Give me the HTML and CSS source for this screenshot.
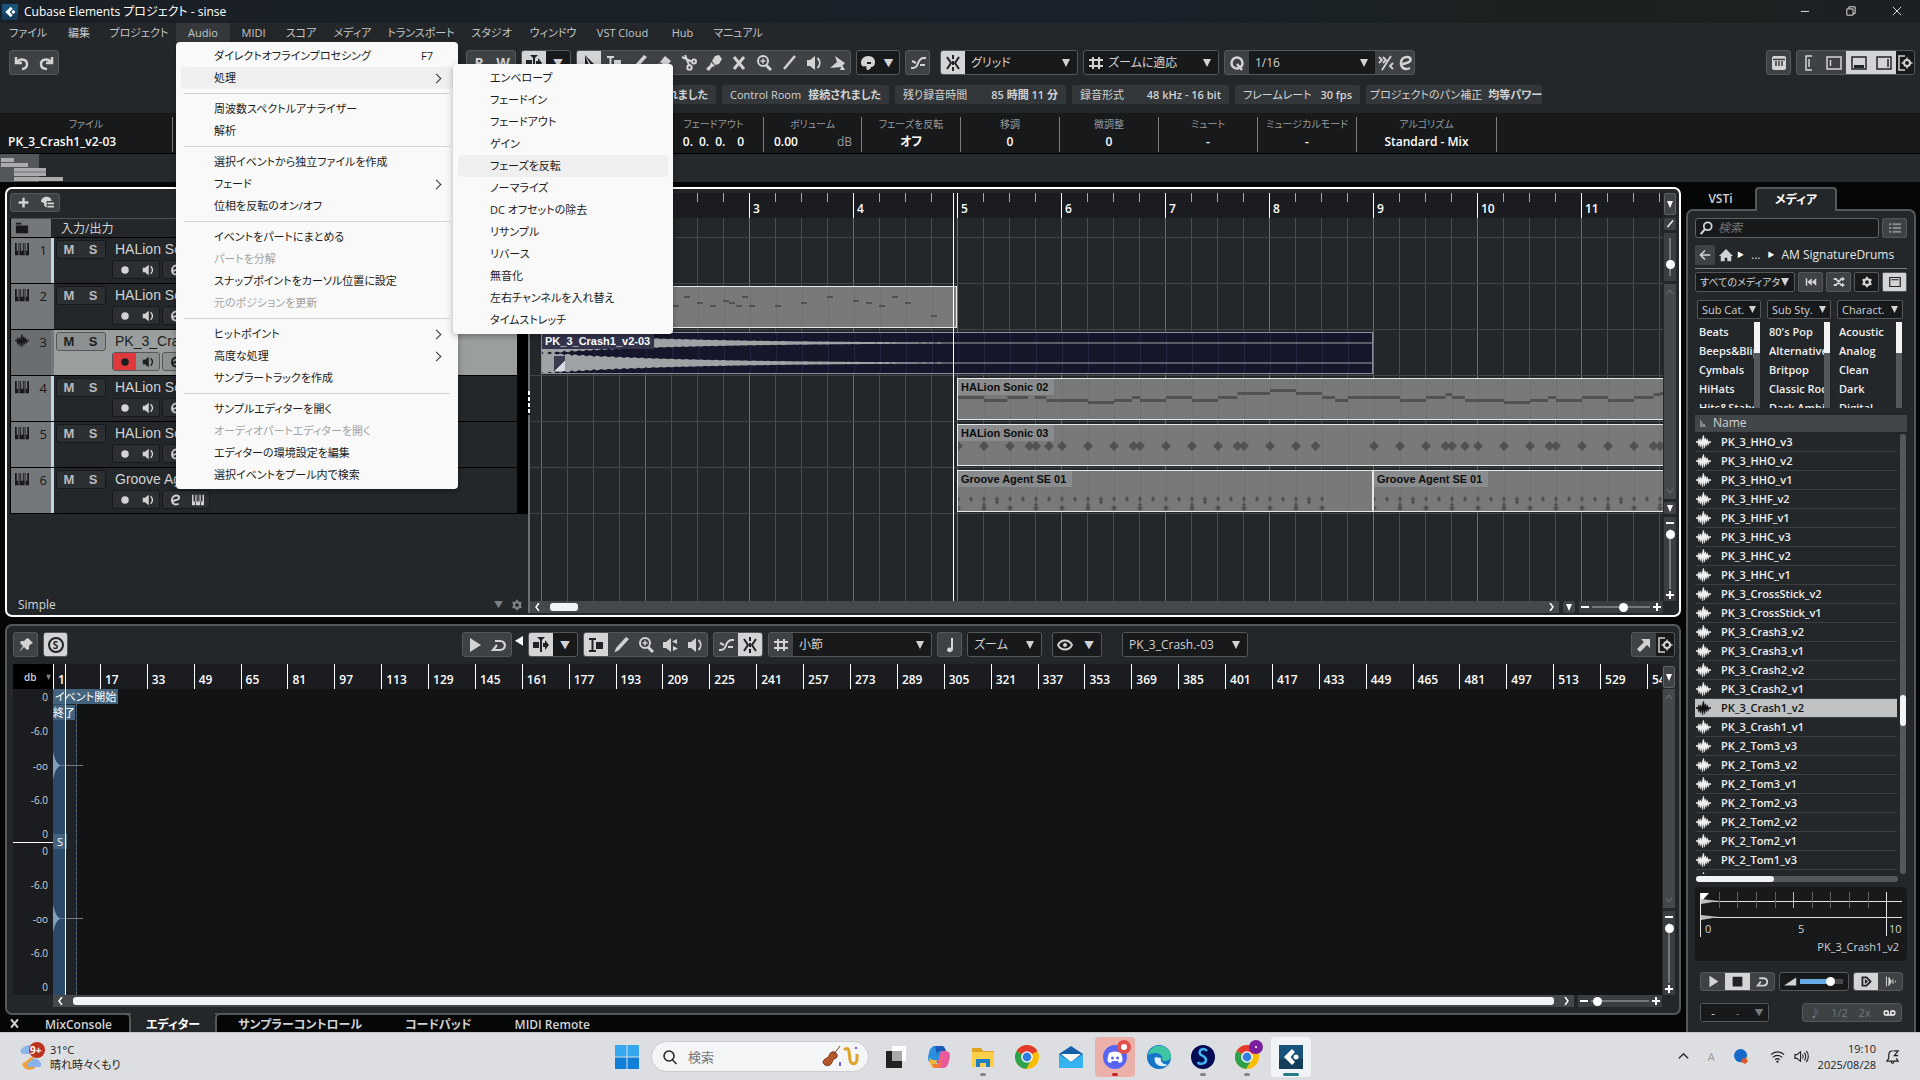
FILE: index.html
```html
<!DOCTYPE html>
<html lang="ja">
<head>
    <meta charset="UTF-8">
    <meta name="viewport" content="width=device-width, initial-scale=1.0">
    <title>Cubase Elements プロジェクト - sinse</title>
    <link rel="stylesheet" href="styles.css">
</head>
<body>
<svg class="sprite" aria-hidden="true">
    <symbol id="undo" viewBox="0 0 16 16"><path d="M2 2v6h6M3 7.500C6 3 13 4 13 9c0 3-2 5-5 5" fill="none" stroke="currentColor" stroke-width="2.500"/></symbol>
    <symbol id="redo" viewBox="0 0 16 16"><path d="M14 2v6H8M13 7.500C10 3 3 4 3 9c0 3 2 5 6 5" fill="none" stroke="currentColor" stroke-width="2.500"/></symbol>
    <symbol id="autoscroll" viewBox="0 0 16 16"><path d="M7 1h2v14H7zM0 5h6v6H0zM10 6h2V3l4 5-4 5v-3h-2zM4 0h8L8 4z" fill="currentColor"/></symbol>
    <symbol id="arrow" viewBox="0 0 16 16"><path d="M4 0v14l3.500-3 4 1.500z M4 0l9 9-5 1z" fill="currentColor"/></symbol>
    <symbol id="range" viewBox="0 0 16 16"><path d="M1 1h7v2H5.500v10H8v2H1v-2h2.500V3H1z" fill="currentColor"/><path d="M8 5h7v7H8z" fill="currentColor"/></symbol>
    <symbol id="pencil" viewBox="0 0 16 16"><path d="M13 0l3 2L6 13l-4.500 2.500L3 11z" fill="currentColor"/></symbol>
    <symbol id="eraser" viewBox="0 0 16 16"><path d="M9 1l6 5-5 6-6-5zM3 8l6 5-2 2H4l-3-3z" fill="currentColor"/></symbol>
    <symbol id="scissors" viewBox="0 0 16 16"><g fill="none" stroke="currentColor" stroke-width="2"><path d="M1 2l9.500 4.500M4 0l4 10"/><circle cx="13" cy="6.500" r="2"/><circle cx="8.500" cy="12.500" r="2.200"/></g></symbol>
    <symbol id="glue" viewBox="0 0 16 16"><path d="M9 1l4-1 3 4-3 5-4 1-3-4zM5 7l4 4-3 1-3 4-3-2 4-4z" fill="currentColor"/></symbol>
    <symbol id="cross" viewBox="0 0 16 16"><path d="M3 2l10 12M13 2L3 14" stroke="currentColor" stroke-width="3"/></symbol>
    <symbol id="zoom" viewBox="0 0 16 16"><circle cx="7" cy="6" r="5" fill="none" stroke="currentColor" stroke-width="2"/><path d="M10 10l5 5" stroke="currentColor" stroke-width="3"/><path d="M4.500 6h5M7 3.500v5" stroke="currentColor" stroke-width="1.500"/></symbol>
    <symbol id="line" viewBox="0 0 16 16"><path d="M14 1L3 14" stroke="currentColor" stroke-width="2.500"/></symbol>
    <symbol id="speaker" viewBox="0 0 16 16"><path d="M1 5h3l5-4v14l-5-4H1z" fill="currentColor"/><path d="M11.500 3c3 3 3 7 0 10" fill="none" stroke="currentColor" stroke-width="1.800"/></symbol>
    <symbol id="scrub" viewBox="0 0 16 16"><path d="M0 5h3l5-4v14l-5-4H0zM14 2v5L9 4.500zM10 9l5 2.500-5 2.500z" fill="currentColor"/></symbol>
    <symbol id="fill" viewBox="0 0 16 16"><path d="M5 1l10 7-4 4-11 1 7-6z" fill="currentColor"/><path d="M12 10l3 5h-5z" fill="currentColor"/></symbol>
    <symbol id="palette" viewBox="0 0 16 16"><path d="M8 1c5 0 7 3 7 6 0 4-2 5-4 5 0 2-2 3-4 3-1-1 0-3-1-4-3 1-5 0-5-3 0-4 3-7 7-7z" fill="currentColor"/><path d="M7 7h4v2H7z" fill="#17191b"/></symbol>
    <symbol id="crossfade" viewBox="0 0 16 16"><path d="M1 13h2c7 0 3-10 11-10h2M2 6l4 2M10 10h5" fill="none" stroke="currentColor" stroke-width="2"/></symbol>
    <symbol id="snap" viewBox="0 0 16 16"><path d="M8 0v4M8 6v4M8 12v4M2 2l4 6-4 6M14 2l-4 6 4 6" fill="none" stroke="currentColor" stroke-width="2"/></symbol>
    <symbol id="hash" viewBox="0 0 16 16"><path d="M5 2v12M11 2v12M1 5h14M1 11h14" stroke="currentColor" stroke-width="2"/></symbol>
    <symbol id="quant" viewBox="0 0 16 16"><circle cx="8" cy="8" r="5.500" fill="none" stroke="currentColor" stroke-width="2.500"/><path d="M8 9l5 6" stroke="currentColor" stroke-width="2.500"/></symbol>
    <symbol id="iq" viewBox="0 0 16 16"><path d="M1 2l3 3-3 3M5 2l3 3-3 3M13 1L4 15M15 8l-3 3 3 3" fill="none" stroke="currentColor" stroke-width="1.800"/></symbol>
    <symbol id="edit" viewBox="0 0 16 16"><path d="M13 13c-4 2-9 1-9-5 0-4 3-6 6-6 4 0 5 4 1 5.500L3 10" fill="none" stroke="currentColor" stroke-width="2.500"/></symbol>
    <symbol id="keyboard" viewBox="0 0 16 16"><rect x="1" y="1" width="14" height="14" rx="2" fill="currentColor"/><path d="M2 4.500h12M5 6v5M8 6v5M11 6v5" stroke="#3b3e41" stroke-width="1.500"/></symbol>
    <symbol id="zone-l" viewBox="0 0 16 16"><path d="M11 1H5v14h6M8 4v8" fill="none" stroke="currentColor" stroke-width="1.500"/></symbol>
    <symbol id="zone-left" viewBox="0 0 16 16"><path d="M1 2h14v12H1zM4.500 5v6" fill="none" stroke="currentColor" stroke-width="1.500"/></symbol>
    <symbol id="zone-low" viewBox="0 0 16 16"><path d="M1 2h14v12H1z" fill="none" stroke="currentColor" stroke-width="1.500"/><path d="M3 10h10v3H3z" fill="currentColor"/></symbol>
    <symbol id="zone-right" viewBox="0 0 16 16"><path d="M1 2h14v12H1zM12 4v8" fill="none" stroke="currentColor" stroke-width="1.500"/></symbol>
    <symbol id="setup" viewBox="0 0 16 16"><path d="M8 1H2v14h6" fill="none" stroke="currentColor" stroke-width="1.500"/><circle cx="10" cy="8" r="3" fill="none" stroke="currentColor" stroke-width="2"/><path d="M10 2.500v3M10 10.500v3M4.500 8h3M12.500 8h3" stroke="currentColor" stroke-width="1.500"/></symbol>
    <symbol id="gear" viewBox="0 0 16 16"><circle cx="8" cy="8" r="4" fill="none" stroke="currentColor" stroke-width="3"/><path d="M8 1v3M8 12v3M2 4.500l2.500 1.500M11.500 10l2.500 1.500M2 11.500L4.500 10M11.500 6L14 4.500" stroke="currentColor" stroke-width="2.500"/></symbol>
    <symbol id="plus" viewBox="0 0 16 16"><path d="M8 2v12M2 8h12" stroke="currentColor" stroke-width="3"/></symbol>
    <symbol id="preset" viewBox="0 0 16 16"><path d="M0 7c0-4 4-6 7-6s6 2 6 5H7v8c-2 0-4-3-3-5zM8 8h8v2H8zM8 12h8v2H8z" fill="currentColor"/></symbol>
    <symbol id="folder" viewBox="0 0 16 16"><path d="M1 2h6v2H1zM1 5h14v9H1z" fill="currentColor"/></symbol>
    <symbol id="keys" viewBox="0 0 16 16"><path d="M0 1h2v9h2v5H0zM4 1h1v9H4zM6 10V1h1v9h2V1h1v9h1v5H5v-5zM11 1h1v9h-1zM14 1h2v14h-4v-5h2z" fill="currentColor"/></symbol>
    <symbol id="wave" viewBox="0 0 16 16"><path d="M0 7h2l1-3 1 3 1-3 1 3 1-4 1-3 1 5 1-2 1 3 1-2 1 3h3v1h-2l-1 3-1-3-1 4-1-3-1 5-1-5-1 6-1-6-1 4-1-4-1 3-1-4H0z" fill="currentColor" stroke="currentColor" stroke-width=".5"/></symbol>
    <symbol id="rec" viewBox="0 0 16 16"><circle cx="8" cy="8" r="5" fill="currentColor"/></symbol>
    <symbol id="play" viewBox="0 0 16 16"><path d="M3 1l11 7-11 7z" fill="currentColor"/></symbol>
    <symbol id="cycle" viewBox="0 0 16 16"><path d="M4 4h5c7 0 6 9 0 9H2l4-5" fill="none" stroke="currentColor" stroke-width="2.200"/></symbol>
    <symbol id="note" viewBox="0 0 16 16"><path d="M9 1h2v11c0 4-6 4-6 1 0-2 2-3 4-2z" fill="currentColor"/></symbol>
    <symbol id="eye" viewBox="0 0 16 16"><path d="M1 8c3-6 11-6 14 0-3 6-11 6-14 0z" fill="none" stroke="currentColor" stroke-width="1.800"/><circle cx="8" cy="8" r="2" fill="currentColor"/></symbol>
    <symbol id="pin" viewBox="0 0 16 16"><path d="M10 1l5 5-2 1-2 2v3l-2 1-3-3-5 5 4-6-3-3 1-2h3l2-2z" fill="currentColor"/></symbol>
    <symbol id="popout" viewBox="0 0 16 16"><path d="M5 2h9v9l-3-3-7 7-3-3 7-7z" fill="currentColor"/></symbol>
    <symbol id="search" viewBox="0 0 16 16"><circle cx="10" cy="6" r="4.500" fill="none" stroke="currentColor" stroke-width="2"/><path d="M7 9l-5 6" stroke="currentColor" stroke-width="2.500"/></symbol>
    <symbol id="list" viewBox="0 0 16 16"><path d="M0 3h3M0 8h3M0 13h3M5 3h11M5 8h11M5 13h11" stroke="currentColor" stroke-width="2.500"/></symbol>
    <symbol id="back" viewBox="0 0 16 16"><path d="M15 8H3M8 2L2 8l6 6" fill="none" stroke="currentColor" stroke-width="2.200"/></symbol>
    <symbol id="home" viewBox="0 0 16 16"><path d="M8 1l8 8h-2v6H9.500v-4h-3v4H2V9H0z" fill="currentColor"/></symbol>
    <symbol id="prev" viewBox="0 0 16 16"><path d="M1 3h2v10H1zM9 3v10L3 8zM15 3v10L9 8z" fill="currentColor"/></symbol>
    <symbol id="shuffle" viewBox="0 0 16 16"><path d="M1 4h3l7 8h2M1 12h3l7-8h2" fill="none" stroke="currentColor" stroke-width="2.500"/><path d="M12 1l4 3-4 3zM12 9l4 3-4 3z" fill="currentColor"/></symbol>
    <symbol id="panel" viewBox="0 0 16 16"><path d="M1 2h14v12H1zM3 5h10" fill="none" stroke="currentColor" stroke-width="1.600"/></symbol>
    <symbol id="stop" viewBox="0 0 16 16"><path d="M2 2h12v12H2z" fill="currentColor"/></symbol>
    <symbol id="ramp" viewBox="0 0 16 16"><path d="M0 13L15 3v10z" fill="currentColor"/></symbol>
    <symbol id="auto" viewBox="0 0 16 16"><path d="M3 3h5l5 5-5 5H3z" fill="none" stroke="currentColor" stroke-width="2.200"/><path d="M6 5l4 3-4 3z" fill="currentColor"/></symbol>
    <symbol id="wait" viewBox="0 0 16 16"><path d="M3 2v12M6 3l3 5-3 5zM11 5v6M14 7v2" fill="currentColor" stroke="currentColor" stroke-width="1.200"/></symbol>
    <symbol id="tape" viewBox="0 0 16 16"><path d="M4 11h8" stroke="currentColor" stroke-width="2"/><circle cx="4" cy="8.500" r="2.500" fill="none" stroke="currentColor" stroke-width="2"/><circle cx="12" cy="8.500" r="2.500" fill="none" stroke="currentColor" stroke-width="2"/></symbol>
    <symbol id="left" viewBox="0 0 8 8"><path d="M5 0L2 4l3 4" fill="none" stroke="currentColor" stroke-width="1.500"/></symbol>
    <symbol id="right" viewBox="0 0 8 8"><path d="M3 0l3 4-3 4" fill="none" stroke="currentColor" stroke-width="1.500"/></symbol>
    <symbol id="up" viewBox="0 0 8 8"><path d="M1 6l3-4 3 4" fill="none" stroke="currentColor"/></symbol>
    <symbol id="down" viewBox="0 0 8 8"><path d="M1 2l3 4 3-4" fill="none" stroke="currentColor"/></symbol>
    <symbol id="drop" viewBox="0 0 8 8"><path d="M1 1h6L4 8z" fill="currentColor"/></symbol>
    <symbol id="minus" viewBox="0 0 8 8"><path d="M0 4h8" stroke="currentColor" stroke-width="2"/></symbol>
    <symbol id="add" viewBox="0 0 8 8"><path d="M0 4h8M4 0v8" stroke="currentColor" stroke-width="2"/></symbol>
    <symbol id="chrome" viewBox="0 0 24 24"><circle cx="12" cy="12" r="12" fill="#fbbc05"/><path d="M12 12L1.600 6A12 12 0 0 1 22.400 6z" fill="#e33b2e"/><path d="M12 12L1.600 6A12 12 0 0 0 11 24l6-10z" fill="#2da14c"/><circle cx="12" cy="12" r="5.800" fill="#fff"/><circle cx="12" cy="12" r="4.400" fill="#2f7de1"/></symbol>
    <symbol id="cubase" viewBox="0 0 24 24"><path d="M0 0h24v24H0z" fill="#17537a"/><path d="M0 14h24v10H0z" fill="#143d5c"/><path d="M13 4l3 3-4.500 5 4.500 5-3 3-8-8z" fill="#fff"/><circle cx="17" cy="12" r="2.500" fill="#fff"/></symbol>
</svg>

<header class="titlebar">
    <svg class="app-icon"><use href="#cubase"/></svg>
    <h1>Cubase Elements プロジェクト - sinse</h1>
    <div class="window-buttons">
        <button aria-label="最小化"><svg viewBox="0 0 12 12"><path d="M1 6.500h10"/></svg></button>
        <button aria-label="元に戻す"><svg viewBox="0 0 12 12"><path d="M1 3.500h7.500V11H1zM3.500 3V1H11v8H9"/></svg></button>
        <button aria-label="閉じる"><svg viewBox="0 0 12 12"><path d="M1 1l10 10M11 1L1 11"/></svg></button>
    </div>
</header>

<nav class="menubar">
    <button>ファイル</button>
    <button>編集</button>
    <button>プロジェクト</button>
    <div class="menu-open">
        <button>Audio</button>
        <div class="menu">
            <button>ダイレクトオフラインプロセシング<kbd>F7</kbd></button>
            <div class="submenu-open">
                <button class="hot sub">処理</button>
                <div class="menu submenu">
                    <button>エンベロープ</button>
                    <button>フェードイン</button>
                    <button>フェードアウト</button>
                    <button>ゲイン</button>
                    <button class="hot">フェーズを反転</button>
                    <button>ノーマライズ</button>
                    <button>DC オフセットの除去</button>
                    <button>リサンプル</button>
                    <button>リバース</button>
                    <button>無音化</button>
                    <button>左右チャンネルを入れ替え</button>
                    <button>タイムストレッチ</button>
                </div>
            </div>
            <hr>
            <button>周波数スペクトルアナライザー</button>
            <button>解析</button>
            <hr>
            <button>選択イベントから独立ファイルを作成</button>
            <button class="sub">フェード</button>
            <button>位相を反転のオン/オフ</button>
            <hr>
            <button>イベントをパートにまとめる</button>
            <button disabled>パートを分解</button>
            <button>スナップポイントをカーソル位置に設定</button>
            <button disabled>元のポジションを更新</button>
            <hr>
            <button class="sub">ヒットポイント</button>
            <button class="sub">高度な処理</button>
            <button>サンプラートラックを作成</button>
            <hr>
            <button>サンプルエディターを開く</button>
            <button disabled>オーディオパートエディターを開く</button>
            <button>エディターの環境設定を編集</button>
            <button>選択イベントをプール内で検索</button>
        </div>
    </div>
    <button>MIDI</button>
    <button>スコア</button>
    <button>メディア</button>
    <button>トランスポート</button>
    <button>スタジオ</button>
    <button>ウィンドウ</button>
    <button>VST Cloud</button>
    <button>Hub</button>
    <button>マニュアル</button>
</nav>

<div class="toolbar main-tools">
    <div class="group">
        <button aria-label="元に戻す"><svg><use href="#undo"/></svg></button>
        <button aria-label="やり直す"><svg><use href="#redo"/></svg></button>
    </div>
    <div class="group states">
        <button>R</button>
        <button>W</button>
    </div>
    <div class="group">
        <button class="on" aria-label="オートスクロール"><svg><use href="#autoscroll"/></svg></button>
        <button class="dark">▼</button>
    </div>
    <div class="group">
        <button class="on" aria-label="選択"><svg><use href="#arrow"/></svg></button>
        <button aria-label="範囲"><svg><use href="#range"/></svg></button>
        <button aria-label="鉛筆"><svg><use href="#pencil"/></svg></button>
        <button aria-label="消しゴム"><svg><use href="#eraser"/></svg></button>
        <button aria-label="はさみ"><svg><use href="#scissors"/></svg></button>
        <button aria-label="のり"><svg><use href="#glue"/></svg></button>
        <button aria-label="ミュート"><svg><use href="#cross"/></svg></button>
        <button aria-label="ズーム"><svg><use href="#zoom"/></svg></button>
        <button aria-label="ライン"><svg><use href="#line"/></svg></button>
        <button aria-label="試聴"><svg><use href="#speaker"/></svg></button>
        <button aria-label="カラー"><svg><use href="#fill"/></svg></button>
    </div>
    <div class="group narrow">
        <button class="dark" aria-label="カラーツール"><svg><use href="#palette"/></svg></button>
        <button class="dark">▼</button>
    </div>
    <div class="group"><button aria-label="クロスフェード"><svg><use href="#crossfade"/></svg></button></div>
    <div class="group snap">
        <button class="on" aria-label="スナップ"><svg><use href="#snap"/></svg></button>
        <select class="w-snap" aria-label="スナップタイプ"><option>グリッド</option></select>
    </div>
    <div class="group dark-group">
        <label for="grid-type"><svg><use href="#hash"/></svg></label>
        <select class="w-grid" id="grid-type"><option>ズームに適応</option></select>
    </div>
    <div class="group">
        <label for="quantize"><svg><use href="#quant"/></svg></label>
        <select class="w-quant" id="quantize"><option>1/16</option></select>
        <button class="slim" aria-label="iQ"><svg><use href="#iq"/></svg></button>
        <button class="slim" aria-label="クオンタイズパネル"><svg><use href="#edit"/></svg></button>
    </div>
    <div class="group push-right"><button aria-label="キーボード"><svg><use href="#keyboard"/></svg></button></div>
    <div class="group">
        <button aria-label="インスペクター"><svg><use href="#zone-l"/></svg></button>
        <button aria-label="左ゾーン"><svg><use href="#zone-left"/></svg></button>
        <button class="on" aria-label="下ゾーン"><svg><use href="#zone-low"/></svg></button>
        <button class="on" aria-label="右ゾーン"><svg><use href="#zone-right"/></svg></button>
        <button class="dark slim" aria-label="レイアウト設定"><svg><use href="#setup"/></svg></button>
    </div>
</div>

<div class="status">
    <p class="chip first"><b>接続されました</b></p>
    <p class="chip room">Control Room <b>接続されました</b></p>
    <p class="chip time">残り録音時間 <b>85 時間 11 分</b></p>
    <p class="chip format">録音形式 <b>48 kHz - 16 bit</b></p>
    <p class="chip rate">フレームレート <b>30 fps</b></p>
    <p class="chip pan">プロジェクトのパン補正 <b>均等パワー</b></p>
</div>

<dl class="infoline">
    <div class="file"><dt>ファイル</dt><dd>PK_3_Crash1_v2-03</dd></div>
    <div class="fade"><dt>フェードアウト</dt><dd>0.&ensp;0.&ensp;0.&emsp;0</dd></div>
    <div class="volume"><dt>ボリューム</dt><dd>0.00 <span>dB</span></dd></div>
    <div><dt>フェーズを反転</dt><dd>オフ</dd></div>
    <div><dt>移調</dt><dd>0</dd></div>
    <div><dt>微調整</dt><dd>0</dd></div>
    <div><dt>ミュート</dt><dd>-</dd></div>
    <div><dt>ミュージカルモード</dt><dd>-</dd></div>
    <div class="algo"><dt>アルゴリズム</dt><dd>Standard - Mix</dd></div>
</dl>

<div class="overview">
    <svg width="64" height="28"><path d="M0 0h39v28H0z" fill="#54575a"/><path d="M1 4h13v4H1zM1 9h27v4H1zM14 14h32v8H14zM14 23h49v4H14z" fill="#a9abad"/><path d="M14 18h32" stroke="#6d7073"/></svg>
</div>

<main class="workspace">
    <section class="left-zone">
        <section class="project">
            <div class="tracklist">
                <div class="list-head">
                    <div class="group small">
                        <button aria-label="トラックを追加"><svg><use href="#plus"/></svg></button>
                        <button aria-label="プリセット"><svg><use href="#preset"/></svg></button>
                    </div>
                </div>
                <div class="list-body">
                    <div class="io-row">
                        <span class="stub"><svg class="icon"><use href="#folder"/></svg></span>
                        <span>入力/出力</span>
                    </div>
                    <div id="tracks"></div>
                </div>
                <div class="list-foot">
                    <span>Simple</span>
                    <span class="foot-tools">▼ <svg class="icon"><use href="#gear"/></svg></span>
                </div>
            </div>
            <div class="splitter"><i></i></div>
            <div class="arrange">
                <div class="ruler"><span>1</span><span>2</span><span>3</span><span>4</span><span>5</span><span>6</span><span>7</span><span>8</span><span>9</span><span>10</span><span>11</span></div>
                <div class="canvas">
                    <div class="lane marker"></div>
                    <div class="lane"></div>
                    <div class="lane"><div class="part bars-1-5"><svg id="notes-a"></svg></div></div>
                    <div class="lane">
                        <div class="part audio"><svg id="wave-a"></svg><span class="part-name">PK_3_Crash1_v2-03</span><i class="fade-flag"></i></div>
                    </div>
                    <div class="lane"><div class="part from-5"><svg id="notes-b"></svg><span class="part-name">HALion Sonic 02</span></div></div>
                    <div class="lane"><div class="part from-5"><svg id="notes-c"></svg><span class="part-name">HALion Sonic 03</span></div></div>
                    <div class="lane">
                        <div class="part bars-5-9"><svg id="notes-d"></svg><span class="part-name">Groove Agent SE 01</span></div>
                        <div class="part from-9"><svg id="notes-e"></svg><span class="part-name">Groove Agent SE 01</span></div>
                    </div>
                </div>
                <div class="hscroll">
                    <div class="track-bar"><svg><use href="#left"/></svg><i class="thumb short"></i><svg class="end"><use href="#right"/></svg></div>
                    <button class="mini" aria-label="ズームプリセット"><svg><use href="#drop"/></svg></button>
                    <div class="zoom-bar"><svg><use href="#minus"/></svg><input type="range" value="55" aria-label="横ズーム"><svg><use href="#add"/></svg></div>
                </div>
                <i class="cursor"></i>
            </div>
            <div class="vtools">
                <button class="mini tall" aria-label="ルーラー"><svg><use href="#drop"/></svg></button>
                <button class="mini" aria-label="スケール"><svg><use href="#line"/></svg></button>
                <div class="vzoom top"><input type="range" value="25" aria-label="波形ズーム"></div>
                <div class="vscroll"><svg><use href="#up"/></svg><svg><use href="#down"/></svg></div>
                <button class="mini" aria-label="トラックズーム"><svg><use href="#drop"/></svg></button>
                <div class="vzoom"><svg><use href="#minus"/></svg><input type="range" value="98" aria-label="縦ズーム"><svg><use href="#add"/></svg></div>
            </div>
        </section>

        <section class="editor">
            <div class="toolbar editor-tools">
                <div class="group"><button aria-label="固定"><svg><use href="#pin"/></svg></button></div>
                <div class="group"><button class="on"><span class="solo">S</span></button></div>
                <div class="group transport">
                    <button aria-label="再生"><svg><use href="#play"/></svg></button>
                    <button aria-label="ループ"><svg><use href="#cycle"/></svg></button>
                </div>
                <span class="nib"></span>
                <div class="group">
                    <button class="on" aria-label="オートスクロール"><svg><use href="#autoscroll"/></svg></button>
                    <button class="dark">▼</button>
                </div>
                <div class="group">
                    <button class="on" aria-label="範囲"><svg><use href="#range"/></svg></button>
                    <button aria-label="鉛筆"><svg><use href="#pencil"/></svg></button>
                    <button aria-label="ズーム"><svg><use href="#zoom"/></svg></button>
                    <button aria-label="スクラブ"><svg><use href="#scrub"/></svg></button>
                    <button aria-label="試聴"><svg><use href="#speaker"/></svg></button>
                </div>
                <div class="group">
                    <button aria-label="ゼロクロス"><svg><use href="#crossfade"/></svg></button>
                    <button class="on" aria-label="スナップ"><svg><use href="#snap"/></svg></button>
                </div>
                <div class="group">
                    <label for="ed-grid"><svg><use href="#hash"/></svg></label>
                    <select class="w-bars" id="ed-grid"><option>小節</option></select>
                </div>
                <div class="group"><button aria-label="音符"><svg><use href="#note"/></svg></button></div>
                <div class="group"><select class="w-zoom" aria-label="ズーム"><option>ズーム</option></select></div>
                <div class="group view">
                    <button class="dark" aria-label="表示"><svg><use href="#eye"/></svg></button>
                    <button class="dark">▼</button>
                </div>
                <div class="group clip"><select class="w-clip" aria-label="クリップ"><option>PK_3_Crash.-03</option></select></div>
                <div class="group push-right">
                    <button aria-label="別ウィンドウ"><svg><use href="#popout"/></svg></button>
                    <button class="dark slim" aria-label="設定"><svg><use href="#setup"/></svg></button>
                </div>
            </div>
            <div class="editor-body">
                <div class="db-head">db <svg><use href="#drop"/></svg></div>
                <div class="ed-ruler" id="ed-ruler"></div>
                <button class="mini tall" aria-label="ルーラー"><svg><use href="#drop"/></svg></button>
                <div class="db-scale">
                    <div><span>0</span><span>-6.0</span><span>-oo</span><span>-6.0</span><span>0</span></div>
                    <div><span>0</span><span>-6.0</span><span>-oo</span><span>-6.0</span><span>0</span></div>
                </div>
                <div class="wave-view">
                    <div class="channel"><svg viewBox="0 0 30 152" preserveAspectRatio="none"><path d="M0 62c2 10 5 13 8 14-3 1-6 4-8 14z" fill="#7fa0bd"/><path d="M8 76h22" stroke="#70777e"/></svg></div>
                    <div class="channel"><svg viewBox="0 0 30 152" preserveAspectRatio="none"><path d="M0 62c2 10 5 13 8 14-3 1-6 4-8 14z" fill="#7fa0bd"/><path d="M8 76h22" stroke="#70777e"/></svg></div>
                    <span class="flag start">イベント開始</span>
                    <span class="flag end">終了</span>
                    <span class="flag sync">S</span>
                    <i class="cursor"></i>
                </div>
                <div class="vtools">
                    <div class="vscroll"><svg><use href="#up"/></svg><svg><use href="#down"/></svg></div>
                    <div class="vzoom"><svg><use href="#minus"/></svg><input type="range" value="98" aria-label="縦ズーム"><svg><use href="#add"/></svg></div>
                </div>
                <div class="hscroll">
                    <div class="track-bar"><svg><use href="#left"/></svg><i class="thumb"></i><svg><use href="#right"/></svg></div>
                    <div class="zoom-bar"><svg><use href="#minus"/></svg><input type="range" value="5" aria-label="横ズーム"><svg><use href="#add"/></svg></div>
                </div>
            </div>
        </section>

        <nav class="lower-tabs">
            <button aria-label="閉じる"><svg><use href="#cross"/></svg></button>
            <button class="before">MixConsole</button>
            <button class="active">エディター</button>
            <button class="after">サンプラーコントロール</button>
            <button>コードパッド</button>
            <button>MIDI Remote</button>
            <span class="edge"></span>
        </nav>
    </section>

    <aside class="right-zone">
        <nav class="right-tabs">
            <button>VSTi</button>
            <button class="active">メディア</button>
        </nav>
        <div class="media">
            <div class="row">
                <label class="search"><svg class="icon"><use href="#search"/></svg><input type="text" placeholder="検索"></label>
                <button class="box muted" aria-label="リスト"><svg><use href="#list"/></svg></button>
            </div>
            <div class="row crumbs">
                <button class="box" aria-label="戻る"><svg><use href="#back"/></svg></button>
                <svg class="icon home"><use href="#home"/></svg>
                <small>▶</small><span>...</span><small>▶</small><a href="#">AM SignatureDrums</a>
            </div>
            <div class="row filters">
                <select aria-label="メディアタイプ"><option>すべてのメディアタ.</option></select>
                <button class="box" aria-label="リセット"><svg><use href="#prev"/></svg></button>
                <button class="box" aria-label="シャッフル"><svg><use href="#shuffle"/></svg></button>
                <button class="box dark" aria-label="設定"><svg><use href="#gear"/></svg></button>
                <button class="box on" aria-label="フィルター"><svg><use href="#panel"/></svg></button>
            </div>
            <div class="categories">
                <div>
                    <select aria-label="サブカテゴリー"><option>Sub Cat.</option></select>
                    <ul><li>Beats</li><li>Beeps&amp;Blips</li><li>Cymbals</li><li>HiHats</li><li>Hits&amp;Stabs</li></ul>
                </div>
                <div>
                    <select aria-label="サブスタイル"><option>Sub Sty.</option></select>
                    <ul><li>80's Pop</li><li>Alternative</li><li>Britpop</li><li>Classic Rock</li><li>Dark Ambient</li></ul>
                </div>
                <div>
                    <select aria-label="キャラクター"><option>Charact.</option></select>
                    <ul><li>Acoustic</li><li>Analog</li><li>Clean</li><li>Dark</li><li>Digital</li></ul>
                </div>
            </div>
            <div class="files-wrap">
                <table class="files">
                    <thead><tr><th><i class="sort"></i>Name</th></tr></thead>
                    <tbody id="files"></tbody>
                </table>
                <i class="files-bar"><i></i></i>
            </div>
            <div class="files-hbar"><i></i></div>
            <div class="preview">
                <svg viewBox="0 0 212 56">
                    <path d="M6 6h8l-8 9z" fill="#fff"/>
                    <path d="M5.500 6v44M6 14.500h201M6 30.500h201M191.500 5v44" stroke="#e4e4e4" fill="none"/>
                    <path d="M24.500 5v16M42.500 5v16M61.500 5v16M80.500 5v16M117.500 5v16M135.500 5v16M154.500 5v16M173.500 5v16" stroke="#5c5f62"/>
                    <path d="M98.500 5v16" stroke="#b5b7b9"/>
                    <path d="M6 12l18 2-18 3zM6 28l18 2-18 3z" fill="#bbb"/>
                </svg>
                <p class="secs"><span>0</span><span>5</span><span>10</span></p>
                <p class="preview-name">PK_3_Crash1_v2</p>
            </div>
            <div class="row player">
                <div class="group small">
                    <button aria-label="再生"><svg><use href="#play"/></svg></button>
                    <button class="on" aria-label="停止"><svg><use href="#stop"/></svg></button>
                    <button aria-label="ループ"><svg><use href="#cycle"/></svg></button>
                </div>
                <div class="group small dark-group volume-box">
                    <label for="vol"><svg><use href="#ramp"/></svg></label>
                    <input type="range" id="vol" value="75">
                </div>
                <div class="group small">
                    <button class="on" aria-label="自動再生"><svg><use href="#auto"/></svg></button>
                    <button aria-label="待機"><svg><use href="#wait"/></svg></button>
                </div>
            </div>
            <div class="row player second">
                <div class="group small dark-group faint"><button class="dark bright">-</button><button class="dark">-</button><button class="dark slim">▼</button></div>
                <div class="group small faint">
                    <button>♪</button><button>1/2</button><button>2x</button>
                    <button class="bright" aria-label="テープ"><svg><use href="#tape"/></svg></button>
                </div>
            </div>
        </div>
    </aside>
</main>

<footer class="taskbar">
    <button class="weather">
        <svg viewBox="0 0 28 30"><path d="M4 22a8 8 0 0 0 15 1l-4-9z" fill="#f0a13c"/><path d="M4 12a4 4 0 0 1 2-7 6 6 0 0 1 10 2v5z" fill="#8fb6ec"/><path d="M10 25a4 4 0 0 1 3-6 5 5 0 0 1 9 1 3 3 0 0 1 0 5z" fill="#8ab2ea"/><circle cx="19" cy="8" r="8" fill="#bd3120"/></svg>
        <b class="badge">9+</b>
        <span>31°C<br>晴れ時々くもり</span>
    </button>
    <div class="apps">
        <button aria-label="スタート"><svg viewBox="0 0 24 24"><path d="M0 0h11.500v11.500H0zM12.500 0H24v11.500H12.500z" fill="#35a7ec"/><path d="M0 12.500h11.500V24H0zM12.500 12.500H24V24H12.500z" fill="#0f7fd8"/></svg></button>
        <label class="task-search">
            <svg viewBox="0 0 16 16"><circle cx="7" cy="7" r="5" fill="none" stroke="#222" stroke-width="1.500"/><path d="M10.500 11l4 4" stroke="#222" stroke-width="1.500"/></svg>
            <input type="text" placeholder="検索">
            <svg class="doodle" viewBox="0 0 38 24"><path d="M12 9l6-8M10 7c3-1 6 2 5 5-1 2-3 1-4 3-1 4-4 7-8 5-4-3-1-6 2-7 3-2 2-5 5-6z" fill="#b4582a" stroke="#7b3a1c"/><path d="M22 5c6-5 5 4 6 10 1 5 6 5 7 0V9" fill="none" stroke="#e0a42c" stroke-width="3"/><path d="M33 3h2M18 17v4" stroke="#8154d8" stroke-width="2"/></svg>
        </label>
        <button aria-label="タスクビュー"><svg viewBox="0 0 24 24"><path d="M3 6h16v17H3z" fill="#222"/><path d="M9 1h14v15H9z" fill="#fff"/><path d="M9 6h10v10H9z" fill="#aaa"/></svg></button>
        <button aria-label="Copilot"><svg viewBox="0 0 24 24"><path d="M8 1h8l-5 17H6C1 18 0 14 2 8c1-5 3-7 6-7z" fill="#2a8fe0"/><path d="M8 1h7c2 0 3 2 4 5h-5c-2 0-3 1-4 4z" fill="#1b58b8"/><path d="M18 6c5 0 6 4 4 10-1 5-3 7-6 7H9l5-17z" fill="#e8589b"/><path d="M2 12c2 4 6 3 8 3l-2 8c-3 0-4-2-5-5z" fill="#f0b63a"/><path d="M9 23c-2 0-3-1-4-4h5c2 0 3-1 4-5l2-4-3 13z" fill="#f0793c"/></svg></button>
        <button class="open" aria-label="エクスプローラー"><svg viewBox="0 0 24 24"><path d="M1 3h9l2 3h11v15H1z" fill="#e0a31f"/><path d="M1 7h22v15H1z" fill="#fbcf4a"/><path d="M5 14h14v8H5z" fill="#1f7fc4"/><path d="M9 18h6v4H9z" fill="#fbcf4a"/></svg></button>
        <button aria-label="Chrome"><svg><use href="#chrome"/></svg></button>
        <button aria-label="メール"><svg viewBox="0 0 24 24"><path d="M0 9l12-8 12 8v14H0z" fill="#1560a8"/><path d="M2 9h20l-10 8z" fill="#fff"/><path d="M0 9l12 8 12-8v14H0z" fill="#35b3ef"/></svg></button>
        <button class="open alert" aria-label="Discord"><svg viewBox="0 0 24 24"><circle cx="12" cy="12" r="12" fill="#5865f2"/><path d="M6 8c4-2 8-2 12 0 1 3 2 6 1 9l-3 1-1-2H9l-1 2-3-1c-1-3 0-6 1-9z" fill="#fff"/><circle cx="9.500" cy="13" r="1.500" fill="#5865f2"/><circle cx="14.500" cy="13" r="1.500" fill="#5865f2"/></svg><i class="dot"></i></button>
        <button aria-label="Edge"><svg viewBox="0 0 24 24"><circle cx="12" cy="12" r="12" fill="#1374c8"/><path d="M1 10C3-2 22-3 24 11c0 5-7 6-9 4 2-7-8-9-14-5z" fill="#3ec6a4"/><path d="M8 12c-2 6 4 12 13 8-6-1-8-4-7-7z" fill="#dff0fa"/></svg></button>
        <button class="open" aria-label="S"><svg viewBox="0 0 24 24"><circle cx="12" cy="12" r="12" fill="#050a55"/><path d="M16 6c-3-4-9-1-7 3 1 2 6 2 6 6s-7 5-8 2" fill="none" stroke="#3fb6ef" stroke-width="2.500"/></svg></button>
        <button class="open" aria-label="Chrome"><svg><use href="#chrome"/></svg><i class="dot purple"></i></button>
        <button class="open current" aria-label="Cubase"><svg><use href="#cubase"/></svg></button>
    </div>
    <div class="tray">
        <svg viewBox="0 0 16 16"><path d="M3 10l5-5 5 5" fill="none" stroke="#222" stroke-width="1.500"/></svg>
        <span class="ime">A</span>
        <svg viewBox="0 0 16 16"><circle cx="7" cy="7" r="7" fill="#1769c9"/><path d="M9 10h4l2 3-3 3-4-2z" fill="#e4572e"/><path d="M12 9h3v4z" fill="#f5c33b"/></svg>
        <svg class="wifi" viewBox="0 0 16 16"><path d="M1 6c4-4 10-4 14 0M3 9c3-3 7-3 10 0M5.500 11.500c1.500-1.500 3.500-1.500 5 0" fill="none" stroke="#222" stroke-width="1.300"/><circle cx="8" cy="13.500" r="1.200" fill="#222"/></svg>
        <svg viewBox="0 0 16 16"><path d="M1 6h2l4-3v10l-4-3H1zM9 6c1 1 1 3 0 4M11 4c2 2 2 6 0 8M13 2c3 3 3 9 0 12" fill="none" stroke="#222" stroke-width="1.200"/></svg>
        <time>19:10<br>2025/08/28</time>
        <svg viewBox="0 0 16 16"><path d="M8 2C5 2 4 4 4 7v3l-2 3h12l-2-3M6.500 13c0 3 3 3 3 0M9 2h5l-4 5h4" fill="none" stroke="#222" stroke-width="1.300"/></svg>
    </div>
</footer>
<script src="script.js"></script>
</body>
</html>
```
FILE: styles.css
```css
* {
    box-sizing: border-box;
}

body {
    margin: 0;
    height: 100vh;
    display: flex;
    flex-direction: column;
    overflow: hidden;
    background: #23272a;
    color: #d2d3d4;
    font-family: "Open Sans", "Noto Sans CJK JP", sans-serif;
    font-size: 12px;
    line-height: 16px;
    font-feature-settings: "palt";
}

button, input, select {
    font: inherit;
    font-feature-settings: inherit;
    color: inherit;
    margin: 0;
    padding: 0;
    border: none;
    background: none;
    outline: none;
}

p, h1, ul, dl, dd {
    margin: 0;
    padding: 0;
}

select {
    appearance: none;
    background: #17191b url("data:image/svg+xml,<svg xmlns='http://www.w3.org/2000/svg' width='8' height='8'><path d='M0 0h8L4 8z' fill='%23d2d3d4'/></svg>") no-repeat right 7px center;
    padding: 0 18px 0 6px;
}

.sprite {
    display: none;
}

.icon {
    width: 14px;
    height: 14px;
}

/* title and menus */
.titlebar {
    flex: 0 0 23px;
    display: flex;
    align-items: center;
    background: linear-gradient(90deg, #1a1f25, #19222b 60%, #1c211f 80%, #1c2023);
    padding-left: 2px;
}

.app-icon {
    width: 16px;
    height: 16px;
    margin-right: 6px;
}

.titlebar h1 {
    padding-top: 1px;
    font-size: 12px;
    font-weight: normal;
    color: #fff;
}

.window-buttons {
    margin-left: auto;
    display: flex;
}

.window-buttons button {
    width: 46px;
    height: 20px;
}

.window-buttons svg {
    width: 10px;
    height: 10px;
    fill: none;
    stroke: #fff;
}

.menubar {
    flex: 0 0 19px;
    display: grid;
    grid-template-columns: 56px 46px 74px 54px 47px 48px 55px 82px 59px 64px 75px 45px 66px;
    font-size: 11px;
}

.menubar button {
    white-space: nowrap;
    color: #c3c5c6;
}

.menu-open,
.submenu-open {
    position: relative;
    display: grid;
}

.menu-open > button {
    background: #34383b;
}

.menu {
    position: absolute;
    z-index: 5;
    top: 100%;
    left: 0;
    width: 282px;
    padding: 3px 5px;
    background: #f9f9f9;
    border-radius: 4px;
    box-shadow: 0 2px 6px rgba(0, 0, 0, 0.3);
    font-size: 11px;
}

.menu button {
    display: flex;
    align-items: center;
    width: 100%;
    height: 22px;
    padding-left: 33px;
    border-radius: 4px;
    color: #1b1b1b;
}

.menu button.hot {
    background: #efefef;
}

.menu button:disabled {
    color: #a3a3a3;
}

.menu kbd {
    font: inherit;
    margin-left: auto;
    padding-right: 20px;
}

.menu .sub::after {
    content: "";
    width: 6px;
    height: 6px;
    margin: 0 13px 0 auto;
    border: solid #333;
    border-width: 1px 1px 0 0;
    transform: rotate(45deg);
}

.menu hr {
    margin: 4px 3px;
    border: none;
    border-top: 1px solid #d2d2d2;
}

.submenu {
    top: -3px;
    left: 272px;
    width: 220px;
}

.submenu button {
    padding-left: 32px;
}

/* toolbars */
.toolbar {
    display: flex;
    gap: 5px;
}

.main-tools {
    padding: 8px 5px 10px 9px;
}

.group {
    display: flex;
    flex: none;
    height: 25px;
    border: 1px solid #55585b;
    border-radius: 3px;
    background: #3f4245;
    overflow: hidden;
}

.group button,
.group label {
    flex: 0 0 25px;
    display: flex;
    align-items: center;
    justify-content: center;
    font-size: 10px;
}

.group button:first-child,
.group button:last-child,
.group label:first-child {
    flex-basis: 24px;
}

.group button:only-child {
    flex-basis: 23px;
}

.group svg {
    width: 16px;
    height: 16px;
}

.group button.slim {
    flex-basis: 21px;
}

.group button.slim:last-child {
    flex-basis: 18px;
}

.group .on {
    background: #d3d4d5;
    color: #202326;
}

.group .dark,
.dark-group {
    background: #17191b;
}

.states {
    margin-left: 402px;
}

.states button {
    font-size: 14px;
    font-weight: bold;
}

.narrow button:first-child,
.narrow button:last-child {
    flex-basis: 21px;
}

.snap {
    margin-left: 5px;
}

.w-snap {
    width: 112px;
}

.w-grid {
    width: 110px;
    padding-left: 0;
}

.w-quant {
    width: 126px;
}

.push-right {
    margin-left: auto;
}

.status {
    display: flex;
    gap: 6px;
    margin-bottom: 9px;
    font-size: 11px;
}

.chip {
    height: 19px;
    padding: 0 8px;
    display: flex;
    align-items: center;
    justify-content: space-between;
    gap: 6px;
    background: #33373a;
    border-radius: 2px;
    white-space: nowrap;
}

.chip b {
    font-weight: 600;
}

.chip.first {
    width: 200px;
    margin-left: 516px;
    justify-content: flex-end;
}

.chip.room {
    width: 167px;
}

.chip.time {
    width: 171px;
}

.chip.format {
    width: 157px;
}

.chip.rate {
    width: 125px;
}

.chip.pan {
    width: 176px;
    padding: 0 4px;
}

.infoline {
    flex: 0 0 41px;
    display: flex;
    padding: 4px 0 1px;
    background: #17191b;
    border-bottom: 1px solid #000;
}

.infoline > div {
    width: 99px;
    border-right: 1px solid #7b7e80;
    text-align: center;
    white-space: nowrap;
}

.infoline dt {
    font-size: 10px;
    color: #96999b;
    line-height: 15px;
}

.infoline dd {
    color: #fff;
    font-weight: 600;
    font-size: 12px;
    line-height: 20px;
}

.infoline .file {
    width: 173px;
}

.infoline .file dd {
    text-align: left;
    padding-left: 8px;
}

.infoline .fade {
    width: 100px;
    margin-left: 491px;
}

.infoline .volume {
    width: 98px;
}

.infoline .volume dd {
    display: flex;
    justify-content: space-between;
    padding: 0 9px 0 10px;
}

.infoline .volume span {
    color: #999c9e;
    font-weight: normal;
}

.infoline .algo {
    width: 140px;
}

.overview {
    flex: 0 0 28px;
    background: #26292c;
    overflow: hidden;
}

.overview svg {
    display: block;
}

/* workspace */
.workspace {
    flex: 1;
    min-height: 0;
    display: grid;
    grid-template-columns: minmax(0, 1fr) 230px;
    gap: 5px;
    padding: 5px 4px 0 5px;
    background: #050606;
}

.left-zone {
    display: grid;
    grid-template-rows: minmax(0, 11fr) 7px minmax(0, 10fr) 17px;
    min-height: 0;
}

.project {
    display: grid;
    grid-template-columns: 518px 2px minmax(0, 1fr) 12px;
    min-height: 0;
    padding: 4px 4px 2px 3px;
    background: #23272a;
    border: 2px solid #fff;
    border-radius: 7px;
}

.tracklist {
    display: flex;
    flex-direction: column;
}

.list-head {
    height: 25px;
}

.list-head .group {
    width: 50px;
}

.group.small {
    height: 19px;
}

.group.small svg {
    width: 13px;
    height: 13px;
}

.list-body {
    padding-right: 11px;
    background: #000;
}

.io-row {
    display: flex;
    gap: 10px;
    height: 20px;
    background: #23272a;
    border-top: 1px solid #4e5255;
    border-bottom: 1px solid #000;
    margin-left: 1px;
    line-height: 19px;
}

.stub {
    display: flex;
    flex: 0 0 40px;
    justify-content: space-between;
    padding: 2px 4px 0 4px;
    background: #75787a;
    color: #17191b;
    font-size: 13px;
}

.track {
    display: flex;
    gap: 2px;
    height: 46px;
    margin-left: 1px;
    border-bottom: 1px solid #000;
    background: #23272a;
}

.track .stub {
    flex-basis: 43px;
    border-right: 3px solid #bcd3e2;
    padding-top: 4px;
}

.track.plain .stub,
.track.selected .stub {
    border-right-color: #75787a;
}

.track.selected .stub {
    background: #6b6e70;
}

.track-body {
    display: grid;
    grid-template-columns: 50px 1fr;
    column-gap: 6px;
    align-content: start;
    padding-top: 2px;
    row-gap: 1px;
}

.track-name {
    font-family: "Liberation Sans", sans-serif;
    font-size: 14px;
    line-height: 18px;
    padding-left: 3px;
}

.track .group {
    height: 19px;
    background: #2b2f32;
    border-color: #17191b;
}

.track .group svg {
    width: 12px;
    height: 12px;
}

.ms button {
    font-family: "Liberation Sans", sans-serif;
    font-size: 13px;
    font-weight: bold;
    color: #b9bbbc;
}

.track-tools {
    grid-column: 2;
    display: flex;
    gap: 2px;
}

.track-tools .group button {
    flex-basis: 23px;
}

.track.selected {
    background: #9b9e9f;
    color: #1c1f21;
}

.track.selected .group {
    background: #8e9192;
    border-color: #55585a;
}

.track.selected button {
    color: #1c1f21;
}

.track.selected .armed {
    background: #e0393b;
}

.list-foot {
    margin-top: auto;
    display: flex;
    justify-content: space-between;
    padding: 0 5px 0 8px;
}

.foot-tools {
    display: flex;
    align-items: center;
    gap: 8px;
    font-size: 9px;
    color: #7e8183;
}

.foot-tools .icon {
    width: 12px;
    height: 12px;
}

.splitter {
    display: flex;
    align-items: center;
    background: #6d7072;
}

.splitter i {
    flex: 1;
    height: 24px;
    background: repeating-linear-gradient(#fff 0 4px, #17191b 4px 6px);
}

.arrange {
    position: relative;
    display: flex;
    flex-direction: column;
    overflow: hidden;
}

.ruler {
    display: flex;
    height: 25px;
    padding-left: 11px;
    background: linear-gradient(90deg, #a5a7a8 1px, transparent 1px) 11px 0 / 26px 9px repeat-x, #1a1c1f;
    overflow: hidden;
}

.ruler span {
    flex: 0 0 104px;
    padding: 8px 0 0 3px;
    border-left: 1px solid #fff;
    color: #fff;
    font-weight: 600;
    font-size: 12px;
}

.canvas {
    flex: 1;
    background:
        linear-gradient(90deg, #6b6e70 1px, transparent 1px) 11px 0 / 104px 100%,
        linear-gradient(90deg, #484c4f 1px, transparent 1px) 11px 0 / 26px 100%;
}

.lane {
    position: relative;
    height: 46px;
    border-bottom: 1px solid #414548;
}

.lane.marker {
    height: 20px;
}

.part {
    position: absolute;
    top: 2px;
    height: 42px;
    border: 1px solid #e6e7e7;
    border-width: 1px;
    background: linear-gradient(90deg, #6f7173 1px, transparent 1px) 0 0 / 26px 100%, #77797b;
    overflow: hidden;
}

.part svg {
    position: absolute;
    top: -1px;
    left: 0;
    width: 100%;
    height: 42px;
}

.part-name {
    position: relative;
    display: inline-block;
    padding: 0 6px 0 3px;
    background: #898b8d;
    color: #0d0e0f;
    font: bold 11px/16px "Liberation Sans", sans-serif;
    vertical-align: top;
}

/* one bar is 104px, bar 1 starts at 11px */
.bars-1-5 {
    left: 11px;
    width: 416px;
}

.audio {
    left: 11px;
    width: 832px;
    border-color: #8b8d9d;
    background: linear-gradient(90deg, #222340 1px, transparent 1px) 0 0 / 26px 100%, #151629;
}

.audio .part-name {
    background: #34354d;
    color: #fff;
    padding-right: 4px;
}

.fade-flag {
    position: absolute;
    left: 12px;
    bottom: 2px;
    width: 11px;
    height: 15px;
    background: linear-gradient(135deg, #3a3c50 60%, #d8dae4 60%);
}

.from-5 {
    left: 427px;
    right: 0;
    border-right: none;
}

.bars-5-9 {
    left: 427px;
    width: 416px;
}

.from-9 {
    left: 843px;
    right: 0;
    border-right: none;
}

.cursor {
    position: absolute;
    top: 0;
    bottom: 12px;
    left: 423px;
    width: 1px;
    background: #fff;
}

.hscroll {
    display: flex;
    gap: 4px;
    height: 12px;
}

.hscroll svg,
.vzoom svg,
.vscroll svg {
    flex: none;
    width: 8px;
    height: 8px;
}

.track-bar {
    flex: 1;
    display: flex;
    align-items: center;
    gap: 8px;
    padding: 0 4px;
    background: #45484a;
    color: #fff;
}

.thumb {
    flex: 1;
    height: 8px;
    border-radius: 3px;
    background: #f2f3f4;
}

.thumb.short {
    flex: 0 0 28px;
}

.track-bar .end {
    margin-left: auto;
}

.mini {
    display: flex;
    align-items: center;
    justify-content: center;
    width: 12px;
    height: 12px;
    background: #3f4346;
    color: #fff;
    border-radius: 2px;
}

.mini svg {
    width: 8px;
    height: 8px;
}

.mini.tall {
    height: 22px;
    border: 1px solid #606365;
}

.zoom-bar {
    display: flex;
    align-items: center;
    gap: 3px;
    width: 84px;
    padding: 0 2px;
    background: #3a3e41;
    color: #fff;
}

input[type="range"] {
    appearance: none;
    flex: 1;
    min-width: 0;
    min-height: 0;
    height: 10px;
    background: linear-gradient(#75787a, #75787a) center / 100% 2px no-repeat;
}

input[type="range"]::-webkit-slider-thumb {
    appearance: none;
    width: 9px;
    height: 9px;
    border-radius: 50%;
    background: #fff;
}

.vtools {
    display: flex;
    flex-direction: column;
    gap: 3px;
    min-height: 0;
    padding: 0 0 12px 1px;
}

.vzoom {
    display: flex;
    flex-direction: column;
    align-items: center;
    gap: 2px;
    height: 84px;
    width: 12px;
    padding: 2px 0;
    background: #3a3e41;
    color: #fff;
}

.vzoom.top {
    height: 48px;
    padding: 5px 0;
}

.vzoom input[type="range"] {
    writing-mode: vertical-lr;
    direction: rtl;
    width: 10px;
    height: 0;
    background: linear-gradient(#75787a, #75787a) center / 2px 100% no-repeat;
}

.vscroll {
    flex: 1;
    display: flex;
    flex-direction: column;
    justify-content: space-between;
    align-items: center;
    width: 12px;
    padding: 4px 0;
    background: #45484a;
    color: #75787a;
}

/* sample editor */
.editor {
    grid-row: 3;
    display: flex;
    flex-direction: column;
    min-height: 0;
    padding: 6px 4px 6px 6px;
    background: #23272a;
    border: 2px solid #55585a;
    border-radius: 7px;
}

.transport {
    margin-left: 389px;
}

.nib {
    width: 10px;
    margin-left: -4px;
    height: 16px;
    background: #fff;
    clip-path: polygon(100% 25%, 100% 85%, 20% 55%);
}

.w-bars {
    width: 138px;
}

.w-zoom {
    width: 73px;
}

.view {
    margin-left: 5px;
}

.clip {
    margin-left: 15px;
}

.w-clip {
    width: 124px;
}

.solo {
    width: 16px;
    height: 16px;
    border: 2px solid #202326;
    border-radius: 50%;
    font-weight: bold;
    font-size: 10px;
    line-height: 12px;
}

.editor-body {
    flex: 1;
    min-height: 0;
    display: grid;
    grid-template-columns: 40px minmax(0, 1fr) 13px;
    grid-template-rows: 25px minmax(0, 1fr) 12px;
    margin-top: 7px;
}

.editor-body > .mini {
    margin: 2px 0 0 1px;
}

.db-head {
    display: flex;
    align-items: center;
    justify-content: space-between;
    padding: 0 1px 0 11px;
    background: #000;
    font-weight: 600;
    font-size: 10px;
}

.db-head svg {
    width: 7px;
    height: 6px;
    color: #888;
}

.ed-ruler {
    display: grid;
    grid-template-columns: repeat(34, minmax(0, 1fr)) 15px;
    background: #1a1c1f;
    overflow: hidden;
}

.ed-ruler span {
    padding: 8px 0 0 4px;
    border-left: 1px solid #fff;
    color: #fff;
    font-weight: 600;
    font-size: 12px;
    overflow: hidden;
}

.db-scale {
    display: grid;
    grid-template-rows: 1fr 1fr;
    background: #1a1c1f;
    font-size: 10px;
    text-align: right;
}

.db-scale div {
    display: flex;
    flex-direction: column;
    justify-content: space-between;
    padding-right: 5px;
}

.db-scale div + div {
    border-top: 1px solid #fff;
}

.wave-view {
    position: relative;
    display: grid;
    grid-template-rows: 1fr 1fr;
    background: #111315;
}

.channel {
    width: 24px;
    background: linear-gradient(90deg, #2b4a69 12px, #1f2226 12px);
    border-right: 1px dashed #5b6065;
}

.channel svg {
    display: block;
    width: 30px;
    height: 100%;
}

.flag {
    position: absolute;
    left: 0;
    padding: 0 2px;
    height: 15px;
    background: #44637f;
    color: #fff;
    font-size: 11px;
    line-height: 15px;
}

.flag.end {
    top: 16px;
    padding: 0;
}

.flag.sync {
    top: calc(50% - 8px);
    padding: 0 4px;
}

.wave-view .cursor {
    top: -25px;
    bottom: 0;
    left: 12px;
}

.editor-body .vtools {
    padding-bottom: 0;
}

.editor-body .hscroll {
    grid-column: 2;
}

.lower-tabs {
    grid-row: 4;
    display: flex;
    overflow: hidden;
    margin-top: -2px;
    font-weight: 600;
}

.lower-tabs button {
    padding: 3px 22px 0 21px;
    white-space: nowrap;
    height: 21px;
    font-size: 12px;
}

.lower-tabs button:first-child {
    padding: 2px 4px 0;
}

.lower-tabs svg {
    width: 11px;
    height: 11px;
}

.lower-tabs .before {
    width: 107px;
    border: solid #55585a;
    border-width: 2px 2px 0 0;
    border-top-right-radius: 5px;
    padding-top: 1px;
}

.lower-tabs .active {
    width: 84px;
    padding: 3px 0 0;
    background: #23272a;
    color: #fff;
}

.lower-tabs .after {
    border: solid #55585a;
    border-width: 2px 0 0 2px;
    border-top-left-radius: 5px;
    padding-top: 1px;
}

/* media rack */
.right-zone {
    display: flex;
    flex-direction: column;
    min-height: 0;
}

.right-tabs {
    display: flex;
    height: 24px;
    margin-bottom: -2px;
    z-index: 1;
    font-weight: 600;
}

.right-tabs button {
    width: 69px;
}

.right-tabs .active {
    width: 82px;
    background: #23272a;
    border: 2px solid #55585a;
    border-bottom: none;
    border-radius: 4px 4px 0 0;
    color: #fff;
}

.media {
    flex: 1;
    min-height: 0;
    display: flex;
    flex-direction: column;
    padding: 7px 7px 9px;
    background: #23272a;
    border: 2px solid #55585a;
    border-bottom: none;
    border-radius: 7px 7px 0 0;
}

.row {
    flex: none;
    display: flex;
    gap: 3px;
    height: 20px;
}

.box {
    display: flex;
    align-items: center;
    justify-content: center;
    width: 25px;
    border: 1px solid #55585b;
    border-radius: 2px;
    background: #3f4245;
}

.box svg {
    width: 14px;
    height: 12px;
}

.box.muted {
    color: #888b8d;
}

.box.dark {
    background: #17191b;
}

.box.on {
    background: #d3d4d5;
    color: #202326;
}

.search {
    flex: 1;
    display: flex;
    align-items: center;
    gap: 5px;
    padding-left: 3px;
    border: 1px solid #606365;
    border-radius: 3px;
    background: #17191b;
}

.search input {
    min-width: 0;
    font-style: italic;
}

.crumbs {
    height: 31px;
    align-items: center;
    gap: 4px;
    padding-top: 3px;
    border-bottom: 1px solid #7b7e80;
    margin-bottom: 3px;
}

.crumbs .box {
    width: 20px;
    height: 20px;
    border: none;
}

.crumbs small {
    font-size: 7px;
    color: #fff;
}

.crumbs span {
    margin: 0 3px;
}

.crumbs a {
    margin-left: 3px;
    color: #e6e7e7;
    text-decoration: none;
}

.filters select {
    flex: 1;
    min-width: 0;
    padding: 0 14px 0 4px;
    border: 1px solid #55585b;
    border-radius: 2px;
    font-size: 10px;
    background-position: right 5px center;
}

.categories {
    flex: none;
    display: grid;
    grid-template-columns: 64px 64px 66px;
    gap: 6px;
    margin: 8px 0 7px 2px;
}

.categories select {
    width: 100%;
    height: 19px;
    padding: 0 0 0 4px;
    border: 1px solid #55585b;
    border-radius: 2px;
    font-size: 11px;
    background-position: right 4px center;
    background-size: 7px 7px;
}

.categories ul {
    height: 86px;
    margin-top: 3px;
    padding: 0 7px 0 2px;
    list-style: none;
    overflow: hidden;
    font-weight: 600;
    font-size: 11px;
    color: #f0f0f0;
    background:
        linear-gradient(#f2f3f4, #f2f3f4) right 1px top / 6px 31px no-repeat,
        linear-gradient(#55585a, #55585a) right 1px top / 6px 100% no-repeat;
}

.categories li {
    line-height: 19px;
    white-space: nowrap;
    overflow: hidden;
}

.files-wrap {
    flex: 1;
    min-height: 0;
    position: relative;
    overflow: hidden;
}

.files {
    width: 100%;
    border-collapse: separate;
    border-spacing: 0;
}

.files th {
    display: block;
    height: 17px;
    margin-bottom: 1px;
    padding: 0 0 0 5px;
    background: #434649;
    font-weight: normal;
    text-align: left;
    line-height: 16px;
}

.sort {
    display: inline-block;
    width: 7px;
    height: 7px;
    margin-right: 6px;
    background: linear-gradient(45deg, #85888a 50%, transparent 50%);
}

.files td {
    display: flex;
    align-items: center;
    gap: 10px;
    height: 19px;
    margin-right: 10px;
    padding: 0 0 0 1px;
    border-bottom: 1px solid #3c4043;
    color: #f0f0f0;
    font-weight: 600;
    font-size: 11px;
}

.files svg {
    width: 15px;
    height: 15px;
}

.files .picked td {
    background: #bfc1c2;
    color: #111;
}

.files-bar {
    position: absolute;
    top: 19px;
    right: 1px;
    bottom: 0;
    width: 6px;
    padding-top: 261px;
    border-radius: 3px;
    background: #55585a;
}

.files-bar i {
    display: block;
    height: 31px;
    border-radius: 3px;
    background: #f2f3f4;
}

.files-hbar {
    flex: none;
    height: 6px;
    margin: 2px 9px 5px 1px;
    border-radius: 3px;
    background: #55585a;
}

.files-hbar i {
    display: block;
    width: 78px;
    height: 6px;
    border-radius: 3px;
    background: #f2f3f4;
}

.preview {
    flex: none;
    height: 74px;
    margin-bottom: 11px;
    border-radius: 4px;
    background: #17191b;
    font-size: 11px;
}

.preview svg {
    display: block;
    width: 100%;
    margin-bottom: -22px;
}

.secs {
    display: grid;
    grid-template-columns: 93px 91px 1fr;
    padding-left: 10px;
}

.preview-name {
    padding: 2px 8px 0;
    text-align: right;
}

.player {
    justify-content: space-between;
    gap: 4px;
    padding: 0 5px;
    margin-bottom: 11px;
}

.second {
    margin-bottom: 0;
}

.volume-box {
    width: 70px;
    padding-right: 5px;
}

.volume-box label:first-child {
    flex-basis: 20px;
}

.volume-box input[type="range"] {
    height: 17px;
    background: linear-gradient(90deg, #65abe6 70%, #45484a 70%) center / 100% 5px no-repeat;
}

.faint button {
    color: #75787a;
    font-size: 11px;
}

.faint button.slim {
    font-size: 9px;
}

.faint .bright {
    color: #e6e7e7;
}

/* taskbar */
.taskbar {
    flex: 0 0 48px;
    position: relative;
    z-index: 2;
    display: flex;
    align-items: center;
    justify-content: space-between;
    padding: 0 20px 0 22px;
    background: #dcdee1;
    border-top: 1px solid #c4c6c9;
    color: #222;
}

.weather {
    position: relative;
    display: flex;
    align-items: center;
    gap: 4px;
    flex: 1;
    margin-left: -4px;
    text-align: left;
    font-size: 11px;
    line-height: 15px;
}

.weather svg {
    width: 28px;
    height: 30px;
}

.badge {
    position: absolute;
    top: 0;
    left: 12px;
    color: #fff;
    font-size: 10px;
    line-height: 16px;
}

.apps {
    display: flex;
    align-items: center;
    gap: 4px;
}

.apps button {
    position: relative;
    display: flex;
    align-items: center;
    justify-content: center;
    width: 40px;
    height: 40px;
    border-radius: 4px;
}

.apps button svg {
    width: 24px;
    height: 24px;
}

.apps .open::after {
    content: "";
    position: absolute;
    bottom: 1px;
    width: 6px;
    height: 3px;
    border-radius: 2px;
    background: #85888a;
}

.apps .alert {
    background: #ebb0aa;
}

.apps .alert::after {
    background: #c3271b;
}

.apps .current {
    background: #f1f3f7;
}

.apps .current::after {
    width: 16px;
    background: #257a85;
}

.dot {
    position: absolute;
    top: 3px;
    right: 4px;
    width: 14px;
    height: 14px;
    border: 4px solid #e2504c;
    border-radius: 50%;
    background: #fff;
}

.dot.purple {
    border-width: 6px;
    border-color: #7a1fa0;
}

.task-search {
    display: flex;
    align-items: center;
    gap: 10px;
    width: 218px;
    height: 31px;
    padding: 0 8px 0 10px;
    border: 1px solid #cbcdd0;
    border-radius: 16px;
    background: #f4f5f6;
    margin-right: 2px;
}

.task-search svg {
    flex: none;
    width: 16px;
    height: 16px;
}

.task-search input {
    flex: 1;
    min-width: 0;
    font-size: 13px;
}

.task-search .doodle {
    width: 38px;
    height: 24px;
}

.tray {
    flex: 1;
    display: flex;
    align-items: center;
    justify-content: flex-end;
    gap: 9px;
    font-size: 11px;
    line-height: 16px;
}

.tray svg {
    width: 15px;
    height: 15px;
}

.tray .wifi {
    margin-left: 12px;
}

.tray time {
    text-align: right;
}

.tray .ime {
    padding: 0 10px 0 8px;
    color: #999;
}
```
FILE: script.js
```js
const BEAT = 26;

const tracks = [
    ['HALion Sonic 01', ''],
    ['HALion Sonic 01', 'plain'],
    ['PK_3_Crash1_v2', 'selected'],
    ['HALion Sonic 02', ''],
    ['HALion Sonic 03', ''],
    ['Groove Agent SE', '']
];

const icon = (name) => `<svg class="icon"><use href="#${name}"/></svg>`;

document.getElementById('tracks').innerHTML = tracks.map(([name, state], i) => `
    <div class="track ${state}">
        <span class="stub">${icon(state === 'selected' ? 'wave' : 'keys')}<span>${i + 1}</span></span>
        <div class="track-body">
            <div class="group ms"><button>M</button><button>S</button></div>
            <span class="track-name">${name}</span>
            <div class="track-tools">
                <div class="group"><button class="armed">${icon('rec')}</button><button>${icon('speaker')}</button></div>
                <div class="group"><button>${icon('edit')}</button><button>${icon('keys')}</button></div>
            </div>
        </div>
    </div>`).join('');

// sample editor ruler, one label every 16 bars
let labels = '';
for (let i = 0; i < 35; i++) {
    labels += `<span>${1 + i * 16}</span>`;
}
document.getElementById('ed-ruler').innerHTML = labels;

// media files
const files = ['3_HHO_v3', '3_HHO_v2', '3_HHO_v1', '3_HHF_v2', '3_HHF_v1', '3_HHC_v3', '3_HHC_v2', '3_HHC_v1',
    '3_CrossStick_v2', '3_CrossStick_v1', '3_Crash3_v2', '3_Crash3_v1', '3_Crash2_v2', '3_Crash2_v1',
    '3_Crash1_v2', '3_Crash1_v1', '2_Tom3_v3', '2_Tom3_v2', '2_Tom3_v1', '2_Tom2_v3', '2_Tom2_v2',
    '2_Tom2_v1', '2_Tom1_v3', '2_Tom1_v2'];
document.getElementById('files').innerHTML = files.map((f) =>
    `<tr class="${f === '3_Crash1_v2' ? 'picked' : ''}"><td>${icon('wave')}PK_${f}</td></tr>`).join('');

// midi notes
const draw = (id, d) => {
    document.getElementById(id).innerHTML = `<path d="${d}" fill="#505254"/>`;
};

const melody = [[134, 20], [145, 11], [158, 17], [171, 20], [184, 15], [190, 17], [197, 20], [203, 11], [210, 20],
    [236, 20], [262, 17], [288, 11], [314, 15], [327, 17], [340, 20], [353, 11], [366, 17], [392, 30]];
draw('notes-a', melody.map(([x, y]) => `M${x - 3} ${y - 1}h6v2h-6z`).join(''));

const bass = [[0, 1, 20], [1, 1.9, 23], [1.9, 2.7, 20], [2.95, 3.4, 20], [3.4, 5, 23], [5, 6, 25], [6, 6.7, 23],
    [6.7, 7, 20], [7, 8, 23], [8, 9, 20], [9, 10, 23], [10, 10.75, 20], [10.75, 12, 16], [12, 13, 13], [13, 14, 16],
    [14, 14.5, 20], [14.5, 15, 23], [15, 17, 20], [17, 18, 23], [18, 18.75, 20], [18.75, 19, 17], [19, 19.5, 20],
    [19.5, 21, 23], [21, 22, 25], [22, 22.7, 23], [22.7, 23, 20], [23, 24, 23], [24, 25, 20], [25, 26, 23],
    [26, 26.75, 20], [26.75, 27, 17], [27, 28, 16]];
draw('notes-b', bass.map(([a, b, y]) => `M${a * BEAT} ${y - 2}H${b * BEAT}v3H${a * BEAT}z`).join(''));

const diamond = (x, y, w, h) => `M${x} ${y - h}l${w} ${h}l${-w} ${h}l${-w} ${-h}z`;
const hits = [0, 1, 2, 2.75, 3, 3.5, 4, 5, 6, 6.75, 7, 8, 9, 10, 10.75, 11, 12, 13, 13.75, 16, 17, 18, 18.75, 19,
    19.5, 20, 21, 22, 22.75, 23, 24, 25, 26, 26.75, 27];
draw('notes-c', hits.map((b) => diamond(b * BEAT, 22, 5, 5)).join(''));

const drums = (end) => {
    let d = '';
    for (let b = 0; b <= end; b += 0.5) {
        const x = b * BEAT;
        d += diamond(x, 29, 2, 3);
        if (b % 4 === 1.5) d += diamond(x, 32, 2, 3);
        if (b % 1 === 0) d += diamond(x, 38, 3, 3);
        if (b % 2 === 1) d += diamond(x, 35, 2, 3);
    }
    return d;
};
draw('notes-d', drums(14));
draw('notes-e', drums(12));

// crash waveform, two decaying channels
let wave = '';
[11, 31].forEach((mid) => {
    let top = '';
    let bottom = '';
    for (let x = 0; x <= 830; x += 2) {
        const jitter = 0.8 + 0.2 * Math.abs(Math.sin(x * 12.9898));
        const amp = Math.max(0.5, 11 * Math.exp(-x / 140) * jitter);
        top += `L${x} ${mid - amp}`;
        bottom = `L${x} ${mid + amp}` + bottom;
    }
    wave += `M0 ${mid}${top}${bottom}z`;
});
document.getElementById('wave-a').innerHTML = `<path d="${wave}" fill="#a0a3a6"/>`;
```
